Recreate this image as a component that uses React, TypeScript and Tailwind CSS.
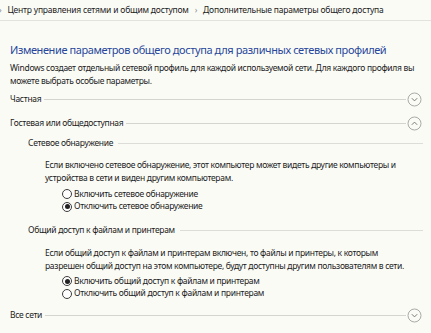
import React from "react";

function Chevron({ up }: { up?: boolean }) {
  return (
    <svg width="15" height="15" viewBox="0 0 15 15" className="shrink-0">
      <circle cx="7.5" cy="7.5" r="6.5" fill="none" stroke="#a9a9a9" strokeWidth="1" />
      {up ? (
        <path d="M4.8 8.8 L7.5 6.1 L10.2 8.8" fill="none" stroke="#7a7a7a" strokeWidth="1" />
      ) : (
        <path d="M4.8 6.2 L7.5 8.9 L10.2 6.2" fill="none" stroke="#7a7a7a" strokeWidth="1" />
      )}
    </svg>
  );
}

function Group({ label, up, className }: { label: string; up?: boolean; className?: string }) {
  return (
    <div className={"flex items-center h-[15px] pl-[10px] pr-[9px] " + (className ?? "")}>
      <span className="whitespace-nowrap">{label}</span>
      <div className="flex-1 h-px bg-[#d4d4d0] ml-[3px] mr-[1px]" />
      <Chevron up={up} />
    </div>
  );
}

function SubGroup({ label, className }: { label: string; className?: string }) {
  return (
    <div className={"flex items-center h-[13px] pl-[28px] pr-[8px] " + (className ?? "")}>
      <span className="whitespace-nowrap">{label}</span>
      <div className="flex-1 h-px bg-[#dcdcd8] ml-[5px]" />
    </div>
  );
}

function Radio({ label, checked }: { label: string; checked?: boolean }) {
  return (
    <div className="flex items-center h-[12.5px] pl-[62px]">
      <span className="w-[10px] h-[10px] rounded-full border border-[#3c3c3c] bg-white flex items-center justify-center mr-[2px]">
        {checked && <span className="w-[5px] h-[5px] rounded-full bg-[#222]" />}
      </span>
      <span className="whitespace-nowrap">{label}</span>
    </div>
  );
}

export default function App() {
  return (
    <div className="w-[431px] h-[333px] overflow-hidden bg-[#fbfbf6] text-[#1c1c1c] font-['Noto_Sans',sans-serif] text-[8.5px] tracking-[-0.3px]">
      <div className="h-[21px] flex items-center border-b border-[#e2e2de] whitespace-nowrap tracking-[-0.2px]">
        <span className="text-[#8a8a8a] -ml-[1px] mr-[6px]">›</span>
        <span>Центр управления сетями и общим доступом</span>
        <span className="text-[#8a8a8a] mx-[6px]">›</span>
        <span>Дополнительные параметры общего доступа</span>
      </div>

      <div className="mt-[21px] px-[10px] text-[11px] leading-[16px] text-[#27479b] whitespace-nowrap tracking-[-0.4px]">
        Изменение параметров общего доступа для различных сетевых профилей
      </div>
      <div className="mt-[3px] px-[10px] leading-[13px] whitespace-nowrap">
        Windows создает отдельный сетевой профиль для каждой используемой сети. Для каждого профиля вы
        <br />
        можете выбрать особые параметры.
      </div>

      <Group label="Частная" className="mt-[5px]" />
      <Group label="Гостевая или общедоступная" up className="mt-[9px]" />

      <SubGroup label="Сетевое обнаружение" className="mt-[6px]" />
      <div className="mt-[8px] pl-[45px] leading-[13px] whitespace-nowrap">
        Если включено сетевое обнаружение, этот компьютер может видеть другие компьютеры и
        <br />
        устройства в сети и виден другим компьютерам.
      </div>
      <div className="mt-[4px]">
        <Radio label="Включить сетевое обнаружение" />
        <Radio label="Отключить сетевое обнаружение" checked />
      </div>

      <SubGroup label="Общий доступ к файлам и принтерам" className="mt-[11px]" />
      <div className="mt-[9px] pl-[45px] leading-[13px] whitespace-nowrap">
        Если общий доступ к файлам и принтерам включен, то файлы и принтеры, к которым
        <br />
        разрешен общий доступ на этом компьютере, будут доступны другим пользователям в сети.
      </div>
      <div className="mt-[3px]">
        <Radio label="Включить общий доступ к файлам и принтерам" checked />
        <Radio label="Отключить общий доступ к файлам и принтерам" />
      </div>

      <Group label="Все сети" className="mt-[8px]" />
    </div>
  );
}
